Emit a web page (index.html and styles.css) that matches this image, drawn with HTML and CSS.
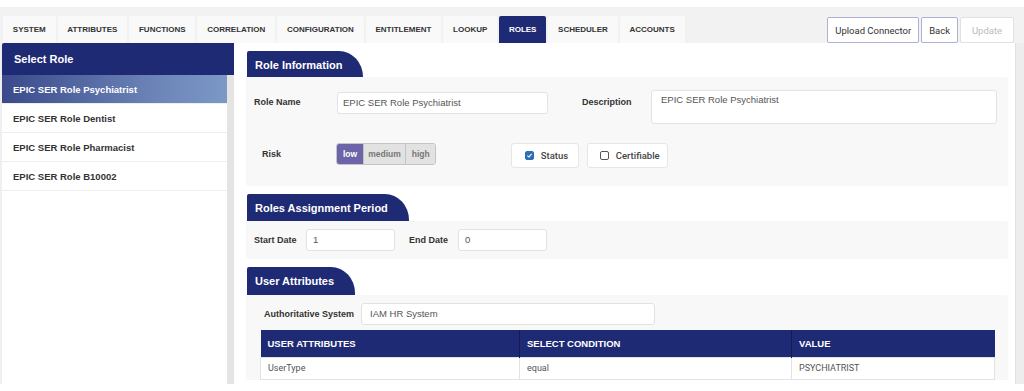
FILE: index.html
```html
<!DOCTYPE html>
<html>
<head>
<meta charset="utf-8">
<link rel="stylesheet" href="styles.css">
</head>
<body>
<div class="topbar">
  <div class="tabs">
    <div class="tab">System</div>
    <div class="tab">Attributes</div>
    <div class="tab">Functions</div>
    <div class="tab">Correlation</div>
    <div class="tab">Configuration</div>
    <div class="tab">Entitlement</div>
    <div class="tab">Lookup</div>
    <div class="tab active">Roles</div>
    <div class="tab">Scheduler</div>
    <div class="tab">Accounts</div>
  </div>
  <div class="actions">
    <button class="btn">Upload Connector</button>
    <button class="btn">Back</button>
    <button class="btn disabled">Update</button>
  </div>
</div>
<div class="main">
  <aside class="roles">
    <div class="roles-head">Select Role</div>
    <div class="roles-body">
      <ul class="role-list">
        <li class="role selected">EPIC SER Role Psychiatrist</li>
        <li class="role">EPIC SER Role Dentist</li>
        <li class="role">EPIC SER Role Pharmacist</li>
        <li class="role">EPIC SER Role B10002</li>
      </ul>
      <div class="scrollbar"></div>
    </div>
  </aside>
  <section class="content">
    <div class="sec">
      <div class="sec-head w-info">Role Information</div>
      <div class="sec-body info">
        <div class="row r1">
          <label class="lbl lbl-name">Role Name</label>
          <div class="input in-name">EPIC SER Role Psychiatrist</div>
          <label class="lbl lbl-desc">Description</label>
          <div class="input textarea">EPIC SER Role Psychiatrist</div>
        </div>
        <div class="row r2">
          <label class="lbl lbl-risk">Risk</label>
          <div class="risk">
            <span class="risk-btn on">low</span><span class="risk-btn mid">medium</span><span class="risk-btn hi">high</span>
          </div>
          <div class="check status"><span class="box checked"><svg viewBox="0 0 10 10" width="9" height="9"><path d="M2 5.2 L4.2 7.2 L8 2.8" fill="none" stroke="#fff" stroke-width="1.6"/></svg></span>Status</div>
          <div class="check cert"><span class="box"></span>Certifiable</div>
        </div>
      </div>
    </div>
    <div class="sec">
      <div class="sec-head w-period">Roles Assignment Period</div>
      <div class="sec-body period">
        <label class="lbl lbl-start">Start Date</label>
        <div class="input in-date">1</div>
        <label class="lbl lbl-end">End Date</label>
        <div class="input in-date">0</div>
      </div>
    </div>
    <div class="sec">
      <div class="sec-head w-attr">User Attributes</div>
      <div class="sec-body attrs">
        <div class="auth-row">
          <label class="lbl lbl-auth">Authoritative System</label>
          <div class="input in-auth">IAM HR System</div>
        </div>
        <table class="grid">
          <thead>
            <tr><th class="c1">User Attributes</th><th class="c2">Select Condition</th><th class="c3">Value</th></tr>
          </thead>
          <tbody>
            <tr><td>UserType</td><td>equal</td><td>PSYCHIATRIST</td></tr>
          </tbody>
        </table>
      </div>
    </div>
  </section>
  <div class="edge"></div>
</div>
</body>
</html>
```
FILE: styles.css
```css
* { box-sizing: border-box; }
html, body { margin: 0; padding: 0; }
body {
  font-family: "Liberation Sans", Arial, sans-serif;
  background: #fff;
  color: #333;
  height: 391px;
  overflow: hidden;
  padding-top: 7px;
}
.topbar {
  background: #f2f2f2;
  height: 36px;
  display: flex;
  justify-content: space-between;
  align-items: flex-end;
  padding: 0 10px 0 3px;
}
.tabs { display: flex; gap: 2px; }
.tab {
  height: 27px;
  line-height: 27px;
  background: #f9f9f9;
  font-size: 8px;
  font-weight: bold;
  text-transform: uppercase;
  color: #333;
  padding: 0 9.8px;
  border-top-left-radius: 2px;
  border-top-right-radius: 2px;
}
.tab.active { background: #1f2a74; color: #fff; }
.actions { display: flex; gap: 2px; align-self: center; margin-top: 10px; }
.btn {
  font-family: Roboto, "Liberation Sans", sans-serif;
  font-size: 9.5px;
  color: #333;
  background: #fff;
  border: 1px solid #aeb0d6;
  border-radius: 2px;
  height: 26px;
  padding: 0 7px;
}
.btn.disabled { color: #bbb; border-color: #e0e0e6; padding: 0 9px; width: 54px; }

.main {
  display: flex;
  background: #efefef;
  height: 341px;
  padding-left: 2px;
}
.roles { width: 232px; display: flex; flex-direction: column; }
.roles-head {
  background: #1f2a74;
  color: #fff;
  font-weight: bold;
  font-size: 11px;
  height: 32px;
  line-height: 33px;
  padding-left: 12px;
  border-top-left-radius: 2px;
}
.roles-body { flex: 1; display: flex; background: #fff; }
.role-list { list-style: none; margin: 0; padding: 0; flex: 1; }
.role {
  height: 29px;
  line-height: 29px;
  padding-left: 11px;
  font-size: 9.5px;
  font-weight: bold;
  color: #333;
  border-bottom: 1px solid #eeeeee;
}
.role.selected {
  background: linear-gradient(90deg, #3a4a8b 0%, #6d86b8 70%, #7b98c6 100%);
  color: #fff;
}
.scrollbar { width: 7px; background: #e4e4e4; }

.content {
  width: 781px;
  background: #fff;
  padding: 8px 7px 0 12px;
  display: flex;
  flex-direction: column;
  gap: 8px;
}
.edge { flex: 1; background: #ededed; border-left: 1px solid #e2e2e2; }
.sec-head {
  background: #1f2a74;
  color: #fff;
  font-weight: bold;
  font-size: 11px;
  height: 26px;
  line-height: 28px;
  padding-left: 8px;
  margin-left: 1px;
  border-top-left-radius: 2px;
  border-top-right-radius: 24px 26px;
}
.w-info { width: 116px; }
.w-period { width: 162px; height: 27px; }
.w-attr { width: 108px; height: 28px; }
.sec-body { background: #f8f8f8; border-radius: 3px; }
.lbl { font-size: 9px; font-weight: bold; color: #333; }
.input {
  background: #fff;
  border: 1px solid #e3e3e3;
  border-radius: 3px;
  height: 22px;
  line-height: 20px;
  font-size: 9.5px;
  color: #555;
  padding-left: 5px;
}
.info { padding: 13px 0 18px 8px; height: 109px; }
.row { display: flex; align-items: center; }
.r1 { height: 34px; align-items: flex-start; }
.r1 .lbl { line-height: 22px; margin-top: 1px; }
.lbl-name { width: 83px; }
.in-name { width: 211px; margin-top: 2px; }
.lbl-desc { width: 69px; margin-left: 34px; }
.textarea { width: 346px; height: 34px; line-height: 18px; padding-left: 9px; font-size: 9.5px; }
.r2 { margin-top: 19px; height: 25px; }
.lbl-risk { width: 82px; padding-left: 8px; margin-top: -4px; }
.risk {
  display: flex;
  height: 22px;
  border-radius: 3px;
  overflow: hidden;
  align-self: flex-start;
  border: 1px solid #c4c4c4;
}
.risk-btn {
  font-size: 8.5px;
  font-weight: bold;
  color: #777;
  background: #e2e2e2;
  line-height: 20px;
  padding: 0 4px;
  border-left: 1px solid #c4c4c4;
}
.risk-btn:first-child { border-left: none; }
.risk-btn.on { background: #6b64a8; color: #fff; padding: 0 6px; }
.risk-btn.hi { padding: 0 5px 0 6px; }
.check {
  height: 25px;
  background: #fff;
  border: 1px solid #e6e6e6;
  border-radius: 3px;
  display: flex;
  align-items: center;
  font-family: Roboto, "Liberation Sans", sans-serif;
  font-weight: 500;
  font-size: 9.5px;
  color: #444;
  padding-left: 13px;
}
.status { width: 68px; margin-left: 75px; }
.cert { width: 81px; margin-left: 8px; padding-left: 12px; }
.box {
  width: 9px; height: 9px;
  border: 1px solid #555;
  border-radius: 2px;
  margin-right: 7px;
  display: flex; align-items: center; justify-content: center;
}
.box.checked { background: #2d6eb4; border-color: #2d6eb4; }
.box svg { display: block; }

.period { height: 38px; display: flex; align-items: center; padding-left: 8px; }
.lbl-start { width: 52px; }
.in-date { width: 89px; padding-left: 6px; }
.lbl-end { width: 49px; margin-left: 14px; }
.attrs { flex: 1; padding: 8px 13px 0 14px; border-radius: 3px 3px 0 0; }
.auth-row { display: flex; align-items: center; padding-left: 4px; }
.lbl-auth { width: 97px; }
.in-auth { width: 294px; padding-left: 8px; font-size: 9.5px; }
.grid {
  margin-top: 5px;
  width: 735px;
  border-collapse: collapse;
  font-size: 9.5px;
}
.grid th {
  background: #1f2a74;
  color: #fff;
  text-transform: uppercase;
  font-weight: bold;
  text-align: left;
  height: 27px;
  padding: 0 7px;
  border-left: 1px solid #131b55;
}
.grid th.c1 { width: 259px; border-left: none; }
.grid th.c2 { width: 272px; }
.grid td {
  background: #fff;
  font-family: Roboto, "Liberation Sans", sans-serif;
  font-size: 9px;
  color: #555;
  height: 22px;
  padding: 0 7px;
  border: 1px solid #e3e3e3;
}
```
